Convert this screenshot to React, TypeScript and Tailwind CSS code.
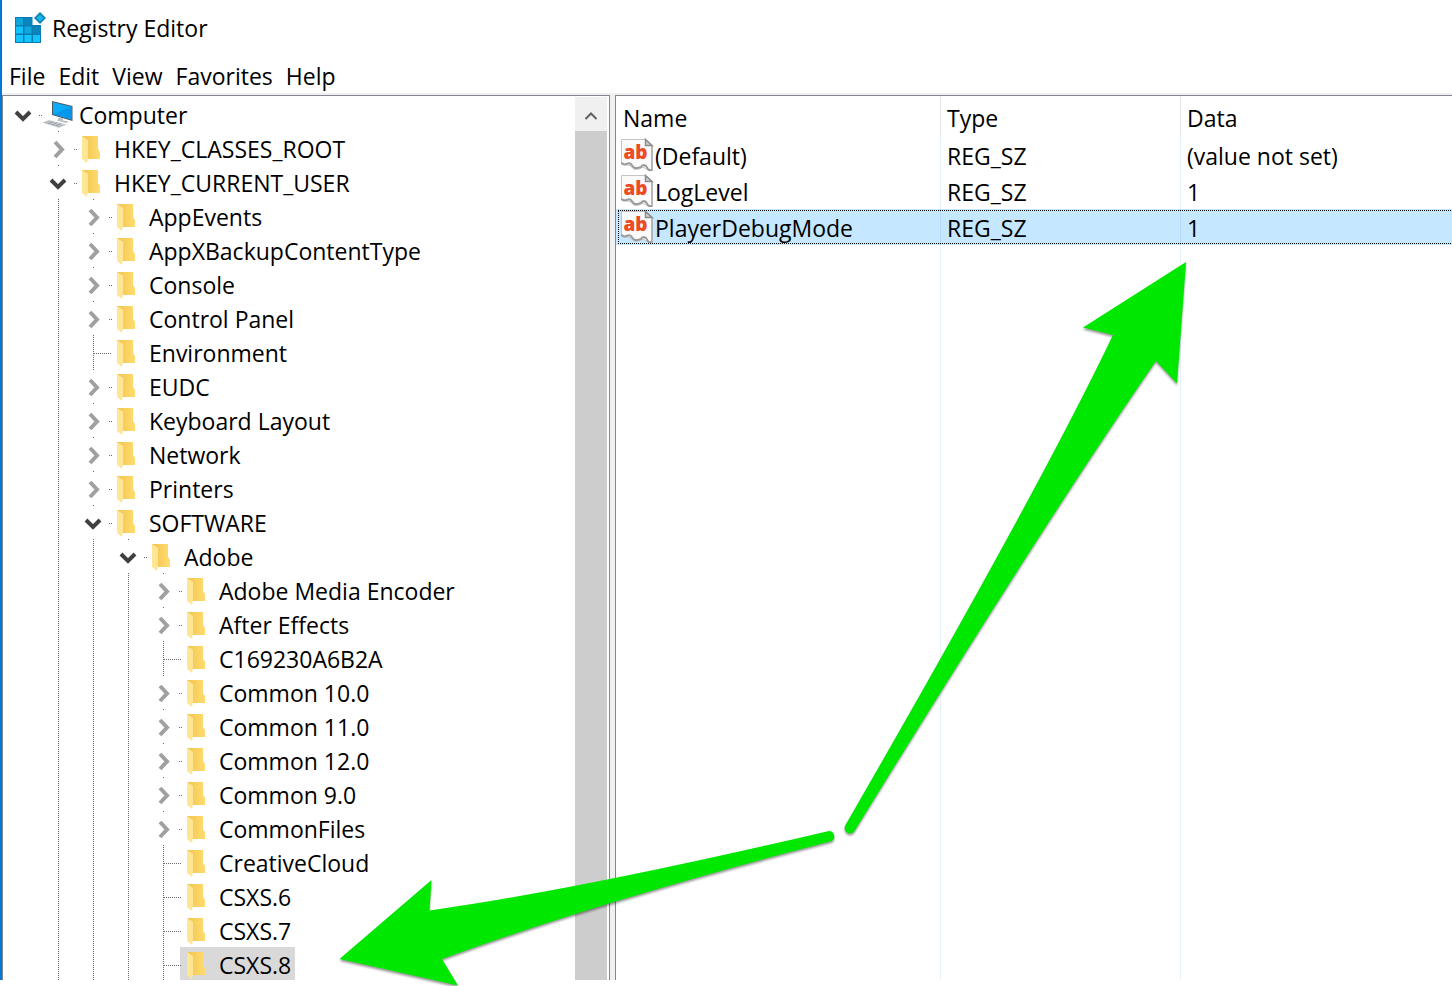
import React from "react";

type Kind = "computer" | "folder";
type State = "open" | "closed" | "leaf";
type TreeItem = { label: string; depth: number; state: State; kind?: Kind; selected?: boolean };

const tree: TreeItem[] = [
  { label: "Computer", depth: 0, state: "open", kind: "computer" },
  { label: "HKEY_CLASSES_ROOT", depth: 1, state: "closed" },
  { label: "HKEY_CURRENT_USER", depth: 1, state: "open" },
  { label: "AppEvents", depth: 2, state: "closed" },
  { label: "AppXBackupContentType", depth: 2, state: "closed" },
  { label: "Console", depth: 2, state: "closed" },
  { label: "Control Panel", depth: 2, state: "closed" },
  { label: "Environment", depth: 2, state: "leaf" },
  { label: "EUDC", depth: 2, state: "closed" },
  { label: "Keyboard Layout", depth: 2, state: "closed" },
  { label: "Network", depth: 2, state: "closed" },
  { label: "Printers", depth: 2, state: "closed" },
  { label: "SOFTWARE", depth: 2, state: "open" },
  { label: "Adobe", depth: 3, state: "open" },
  { label: "Adobe Media Encoder", depth: 4, state: "closed" },
  { label: "After Effects", depth: 4, state: "closed" },
  { label: "C169230A6B2A", depth: 4, state: "leaf" },
  { label: "Common 10.0", depth: 4, state: "closed" },
  { label: "Common 11.0", depth: 4, state: "closed" },
  { label: "Common 12.0", depth: 4, state: "closed" },
  { label: "Common 9.0", depth: 4, state: "closed" },
  { label: "CommonFiles", depth: 4, state: "closed" },
  { label: "CreativeCloud", depth: 4, state: "leaf" },
  { label: "CSXS.6", depth: 4, state: "leaf" },
  { label: "CSXS.7", depth: 4, state: "leaf" },
  { label: "CSXS.8", depth: 4, state: "leaf", selected: true },
];

const values = [
  { name: "(Default)", type: "REG_SZ", data: "(value not set)" },
  { name: "LogLevel", type: "REG_SZ", data: "1" },
  { name: "PlayerDebugMode", type: "REG_SZ", data: "1", selected: true },
];

function RegistryIcon() {
  return (
    <svg width="32" height="32" viewBox="0 0 32 32" aria-hidden="true">
      <rect x="1" y="5" width="26" height="26" fill="#0a7cb4" />
      <g fill="#12c4fb">
        <rect x="2" y="6" width="7" height="7" fill="#0fa6dc" />
        <rect x="10.500" y="6" width="7" height="7" fill="#0a86bd" />
        <rect x="2" y="14.500" width="7" height="7" />
        <rect x="10.500" y="14.500" width="7" height="7" fill="#0fa6dc" />
        <rect x="19" y="14.500" width="7" height="7" fill="#0a86bd" />
        <rect x="2" y="23" width="7" height="7" />
        <rect x="10.500" y="23" width="7" height="7" />
        <rect x="19" y="23" width="7" height="7" />
      </g>
      <path d="M18.500 4h9v9h-9z" fill="#fff" />
      <path d="M26 0l6 6-6 6-6-6z" fill="#0a84b8" />
      <path d="M26 2.500l3.500 3.500-3.500 3.500-3.500-3.500z" fill="#1bb5e8" />
    </svg>
  );
}

function ComputerIcon() {
  return (
    <svg width="39" height="34" viewBox="0 0 39 34" aria-hidden="true" className="shrink-0">
      <path d="M12 4l20.500 5v15L12 18z" fill="#4d5a63" />
      <path d="M13 5.300l18.500 4.500v12.700L13 17.200z" fill="#0cabf8" />
      <path d="M13 17.200L31.500 9.800v12.700z" fill="#0697ea" />
      <path d="M19 20.500l4 1v2l6 1-3 1.500-9-2.500z" fill="#b9bfc4" />
      <path d="M2 25.500l7-2.500 18 4.500-8 3.500z" fill="#c9ced2" />
      <path d="M5 25.500l15 4M7.500 24.500l15 4M8 27l5-3M12 28l5-2.500M16 29l5-2.500" stroke="#99a1a8" strokeWidth=".7" />
    </svg>
  );
}

function FolderIcon() {
  return (
    <svg width="39" height="34" viewBox="0 0 39 34" aria-hidden="true" className="shrink-0">
      <defs>
        <linearGradient id="folder-back" x1="0" x2="1">
          <stop offset="0" stopColor="#f2c44e" />
          <stop offset="1" stopColor="#ffdc70" />
        </linearGradient>
      </defs>
      <path d="M7 5h16v13l2 3v7H12z" fill="url(#folder-back)" />
      <path d="M7 5l6 4v18l-1 5-5-4z" fill="#ffe696" />
    </svg>
  );
}

function Chevron({ open }: { open: boolean }) {
  return open ? (
    <path d="M11 15l7 7 7-7" fill="none" stroke="#404040" strokeWidth="4" />
  ) : (
    <path d="M15 11l7 7.500-7 7.500" fill="none" stroke="#a0a0a0" strokeWidth="4" />
  );
}

const guide = { stroke: "#6a6a6a", strokeDasharray: "1 1", shapeRendering: "crispEdges" as const };

function GuideCell({ line }: { line: boolean }) {
  return (
    <svg width="35" height="34" aria-hidden="true" className="shrink-0">
      {line && <path d="M18.500 0v34" {...guide} />}
    </svg>
  );
}

function TreeRow({ item }: { item: TreeItem }) {
  const { label, depth, state, kind, selected } = item;
  return (
    <li className="flex h-[34px] items-start pl-0.5">
      {Array.from({ length: depth }, (_, i) => (
        <GuideCell key={i} line={i > 0} />
      ))}
      <svg width="35" height="34" aria-hidden="true" className="relative z-10 shrink-0 overflow-visible">
        {state === "leaf" ? (
          <path d="M18.500 0v34M19 18.500h18" fill="none" {...guide} />
        ) : (
          <>
            {depth > 0 && <path d="M18.500 0v1" {...guide} />}
            <path d="M34 18.500h3" {...guide} />
            <Chevron open={state === "open"} />
          </>
        )}
      </svg>
      <button
        type="button"
        className={selected ? "flex h-[33px] items-start bg-[#d9d9d9] pr-1 text-left" : "flex h-[33px] items-start pr-1 text-left"}
      >
        {kind === "computer" ? <ComputerIcon /> : <FolderIcon />}
        <span className="pt-[3px] leading-[30px] whitespace-nowrap">{label}</span>
      </button>
    </li>
  );
}

function StringValueIcon() {
  return (
    <svg width="34" height="36" viewBox="0 0 34 36" aria-hidden="true" className="shrink-0">
      <path d="M.5 2.500h24l6.500 6V33.500c-4 1-5-2-9-3-3 0-3 2-7 2-4 0-4-4-8-4.500l-6.500-1z" fill="#fafafa" stroke="#c4c4c4" />
      <path d="M0 26l3 1.500c3 0 4-2 6-1 2 .5 2 3.500 5 4.500 2 .5 4-.5 6-1 1-2 3-2.500 5-1 1 1 1 3 3 4h3" fill="none" stroke="#9c9c9c" strokeWidth="2" />
      <path d="M31 8.500V34" stroke="#a8a8a8" strokeWidth="1.500" />
      <path d="M24.500 2.500v6H31z" fill="#d0d0d0" stroke="#8c8c8c" strokeWidth="1.500" />
      <text x="2.500" y="21.500" fontSize="19" fontWeight="800" fill="#ee4b23" fontFamily="Open Sans, sans-serif">ab</text>
    </svg>
  );
}

function Arrows() {
  return (
    <svg
      width="1452"
      height="986"
      viewBox="0 0 1452 986"
      aria-hidden="true"
      className="pointer-events-none absolute top-0 left-0 z-20 drop-shadow-[0_2px_1px_rgba(0,0,0,0.4)]"
    >
      <g fill="#00e800">
        <path d="M339.500 959L431.500 880L429.500 910.500Q580 889.500 829 831A5.500 5.500 0 0 1 832 841Q600 901 442 959L458 985.500Z" />
        <path d="M1186 262L1083 327.500L1113 335Q1040 488 845.500 825A5 5 0 0 0 854.500 831Q1046 520 1156 361L1177 383.500Z" />
      </g>
    </svg>
  );
}

export default function App() {
  return (
    <div className="relative h-screen overflow-hidden bg-white pb-1.5 font-['Open_Sans','Noto_Sans',sans-serif] text-[23px] text-black">
      <div className="flex h-full flex-col border-l-2 border-[#0078d7]">
        <header className="flex h-14 shrink-0 items-center gap-1.5 pl-3">
          <RegistryIcon />
          <h1>Registry Editor</h1>
        </header>
        <nav className="flex h-[37px] shrink-0 items-center gap-[13px] pt-0.5 pl-[7px] leading-8">
          <button type="button">File</button>
          <button type="button">Edit</button>
          <button type="button">View</button>
          <button type="button">Favorites</button>
          <button type="button">Help</button>
        </nav>
        <main className="flex min-h-0 flex-1 bg-[#f0f0f0] pt-0.5">
          <section aria-label="Keys" className="flex w-[608px] shrink-0 border-x border-t border-[#828790] bg-white pt-px pr-0.5">
            <ul className="min-w-0 flex-1 overflow-hidden">
              {tree.map((item) => (
                <TreeRow key={item.label} item={item} />
              ))}
            </ul>
            <div className="w-8 shrink-0 bg-[#cdcdcd]">
              <button type="button" aria-label="Scroll up" className="flex h-[34px] w-full items-center justify-center bg-[#f0f0f0] pt-1">
                <svg width="14" height="10" viewBox="0 0 14 10" aria-hidden="true">
                  <path d="M1.500 8L7 2.500 12.500 8" fill="none" stroke="#606060" strokeWidth="2" />
                </svg>
              </button>
            </div>
          </section>
          <section aria-label="Values" className="ml-[5px] min-w-0 flex-1 overflow-hidden border-t border-l border-[#828790] bg-white">
            <table className="h-full w-full table-fixed border-separate border-spacing-0 text-left whitespace-nowrap">
              <thead>
                <tr className="h-[41px]">
                  <th className="w-[325px] border-r border-[#e5e5e5] p-0 pt-0.5 pl-[7px] leading-9 font-normal">Name</th>
                  <th className="w-60 border-r border-[#e5e5e5] p-0 pt-0.5 pl-1.5 leading-9 font-normal">Type</th>
                  <th className="p-0 pt-0.5 pl-1.5 leading-9 font-normal">Data</th>
                </tr>
              </thead>
              <tbody>
                {values.map((v) => (
                  <tr key={v.name} className={v.selected ? "relative h-9 bg-[#c5e7ff]" : "h-9"}>
                    <td
                      className={
                        v.selected
                          ? "border-r border-[#b5dcfa] p-0 after:absolute after:inset-y-px after:-right-px after:left-0.5 after:border after:border-dotted after:border-black"
                          : "border-r border-[#e6f1fb] p-0"
                      }
                    >
                      <div className="flex pl-[5px]">
                        <StringValueIcon />
                        <span className="pt-0.5 leading-[34px]">{v.name}</span>
                      </div>
                    </td>
                    <td className={v.selected ? "border-r border-[#b5dcfa] p-0 pt-0.5 pl-1.5 leading-[34px]" : "border-r border-[#e6f1fb] p-0 pt-0.5 pl-1.5 leading-[34px]"}>{v.type}</td>
                    <td className="p-0 pt-0.5 pl-1.5 leading-[34px]">{v.data}</td>
                  </tr>
                ))}
                <tr aria-hidden="true">
                  <td className="border-r border-[#e6f1fb]" />
                  <td className="border-r border-[#e6f1fb]" />
                  <td />
                </tr>
              </tbody>
            </table>
          </section>
        </main>
      </div>
      <Arrows />
    </div>
  );
}
